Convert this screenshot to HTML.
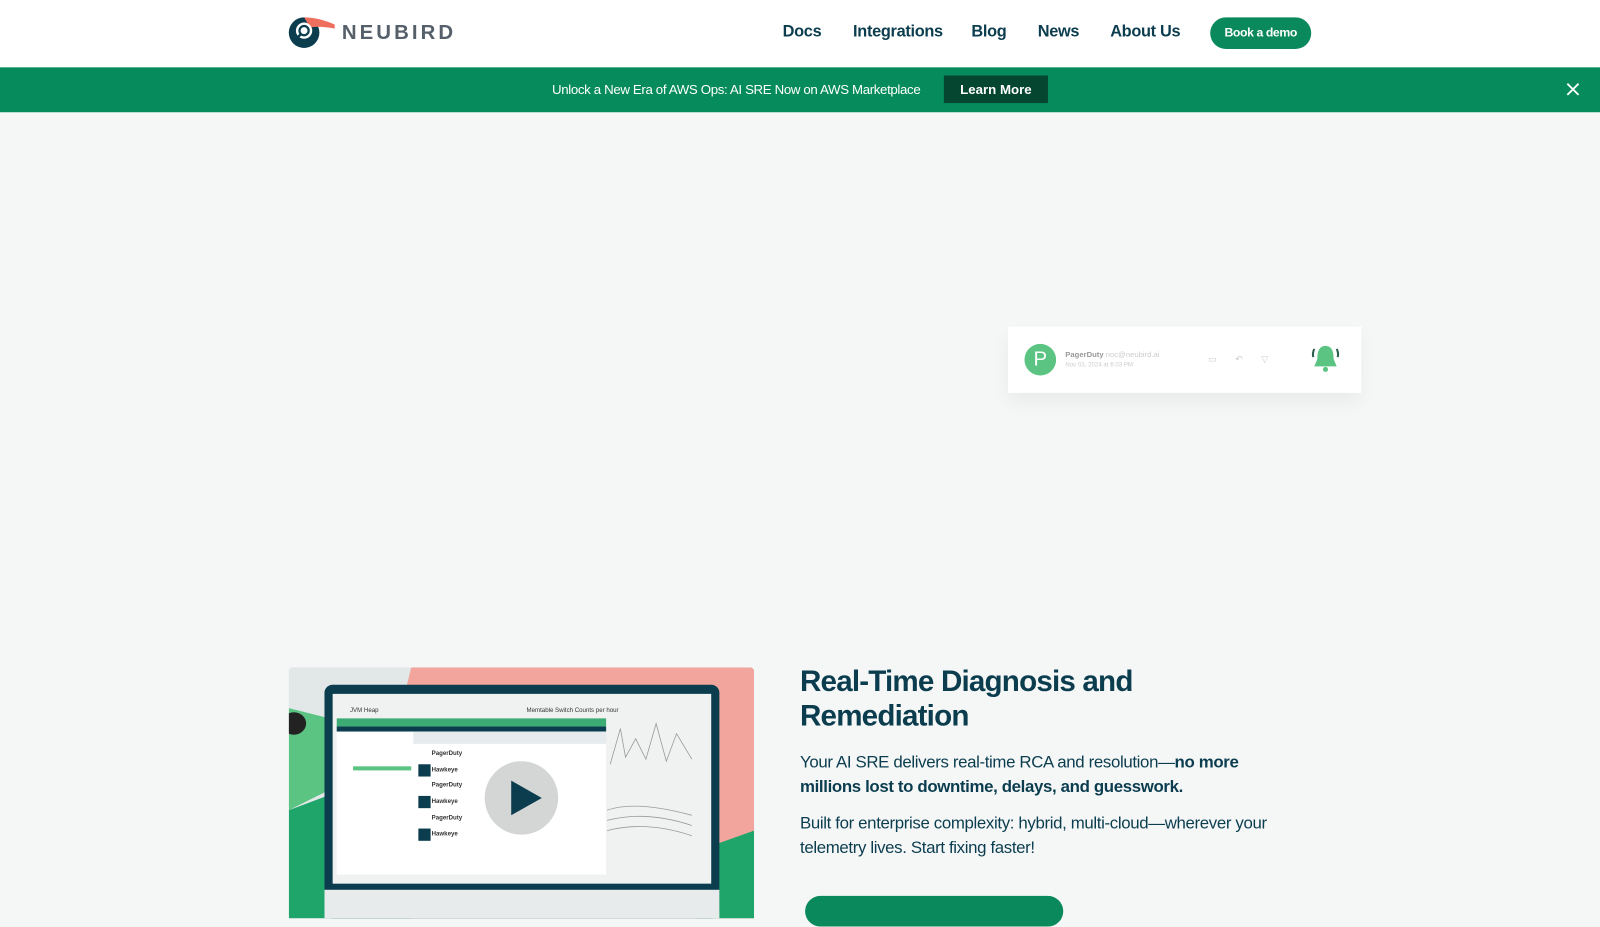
<!DOCTYPE html>
<html><head><meta charset="utf-8"><style>
*{margin:0;padding:0;box-sizing:border-box}
body{width:1600px;height:900px;overflow:hidden;background:#f5f7f7;font-family:"Liberation Sans",Arial,sans-serif;position:relative;color:#0b3d4f}
#w{position:absolute;left:0;top:0;width:1568px;height:882px;transform:scale(1.0204);transform-origin:0 0}
.hdr{position:absolute;left:0;top:0;width:1568px;height:66px;background:#fff}
.nav a{position:absolute;top:23px;font-size:16px;font-weight:bold;color:#0b3d4f;text-decoration:none;letter-spacing:-0.3px}
.btn{position:absolute;left:1186px;top:17px;width:99px;height:31px;border-radius:16px;background:#0a8a5c;color:#fff;font-size:12px;font-weight:bold;text-align:center;line-height:31px;letter-spacing:-0.4px}
.ban{position:absolute;left:0;top:66px;width:1568px;height:44px;background:#058b5c}
.ban .t{position:absolute;left:541px;top:14px;color:#fff;font-size:13px;letter-spacing:-0.35px;white-space:nowrap}
.ban .lm{position:absolute;left:925px;top:8px;width:102px;height:27px;background:#054631;color:#fff;font-weight:bold;font-size:13px;text-align:center;line-height:27px}
.card{position:absolute;left:988px;top:320px;width:346px;height:65px;background:#fff;box-shadow:0 10px 18px rgba(0,0,0,.05)}
h2{position:absolute;left:784px;top:651px;font-size:29px;line-height:34px;font-weight:bold;letter-spacing:-0.8px;color:#0b3d4f}
.p{position:absolute;left:784px;font-size:16.5px;line-height:23.5px;color:#0b3d4f;width:480px;letter-spacing:-0.35px}
</style></head><body><div id="w">
<div class="hdr">
<svg style="position:absolute;left:282px;top:15px" width="50" height="34" viewBox="0 0 50 34">
<circle cx="16" cy="17" r="15" fill="#0b3d4f"/>
<path d="M16 2 Q30 2 46 9 L46 13 Q30 10 22 12 Z" fill="#ef6f5e"/>
<circle cx="16" cy="15" r="8" fill="#fff"/>
<circle cx="16" cy="15" r="4.5" fill="none" stroke="#0b3d4f" stroke-width="2.2"/>
<path d="M13 18 L8 24" stroke="#0b3d4f" stroke-width="2.5"/>
</svg>
<div style="position:absolute;left:335px;top:21px;font-size:20px;font-weight:bold;letter-spacing:3px;color:#56606a">NEUBIRD</div>
<div class="nav"><a style="left:767px">Docs</a><a style="left:836px">Integrations</a><a style="left:952px">Blog</a><a style="left:1017px">News</a><a style="left:1088px">About Us</a></div>
<div class="btn">Book a demo</div>
</div>
<div class="ban"><div class="t">Unlock a New Era of AWS Ops: AI SRE Now on AWS Marketplace</div><div class="lm">Learn More</div>
<svg style="position:absolute;left:1535px;top:15px" width="13" height="13"><path d="M1 1L12 12M12 1L1 12" stroke="#fff" stroke-width="1.8"/></svg></div>
<div class="card">
<div style="position:absolute;left:16px;top:17px;width:31px;height:31px;border-radius:50%;background:#5cc483;color:#fff;font-size:20px;text-align:center;line-height:31px">P</div>
<div style="position:absolute;left:56px;top:23px;font-size:7.5px;font-weight:bold;color:#999">PagerDuty <span style="font-weight:normal;color:#ccc">noc@neubird.ai</span></div>
<div style="position:absolute;left:56px;top:35px;font-size:6px;color:#ccc">Nov 03, 2024 at 6:03 PM</div>
<div style="position:absolute;left:196px;top:27px;font-size:9px;color:#ccc;letter-spacing:18px">▭↶▽</div>
<svg style="position:absolute;left:296px;top:16px" width="30" height="32" viewBox="0 0 30 32"><path d="M15 3 C8 3 7 10 7 16 L4 23 L26 23 L23 16 C23 10 22 3 15 3Z" fill="#5cc483"/><circle cx="15" cy="26" r="2.5" fill="#5cc483"/><path d="M4 6 Q2 10 3 14 M26 6 Q28 10 27 14" stroke="#2b5d4c" stroke-width="2" fill="none"/></svg>
</div>
<div style="position:absolute;left:283px;top:654px;width:456px;height:246px;overflow:hidden;background:#e2e7e7;border-radius:4px 4px 0 0">
<svg width="456" height="246" style="position:absolute;left:0;top:0">
<polygon points="120,0 456,0 456,246 60,246" fill="#f2a59c"/>
<polygon points="0,40 40,50 80,100 0,140" fill="#5cc483"/>
<polygon points="0,140 120,95 120,246 0,246" fill="#1fa56a"/>
<polygon points="400,180 456,160 456,246 400,246" fill="#1fa56a"/>
<ellipse cx="5" cy="55" rx="12" ry="11" fill="#222"/>
<rect x="35" y="17" width="387" height="229" rx="8" fill="#0b3d4f"/>
<rect x="43" y="26" width="371" height="186" fill="#f0f2f2"/>
<rect x="35" y="218" width="387" height="28" fill="#e8ebeb"/>
<rect x="47" y="50" width="264" height="8" fill="#3dac74"/>
<rect x="47" y="58" width="264" height="5" fill="#0b3d4f"/>
<rect x="47" y="63" width="264" height="140" fill="#fff"/>
<rect x="122" y="63" width="189" height="12" fill="#e6ecee"/>
<rect x="63" y="97" width="57" height="4" fill="#5cc483"/>
<rect x="127" y="95" width="12" height="12" fill="#0b3d4f"/>
<rect x="127" y="126" width="12" height="12" fill="#0b3d4f"/>
<rect x="127" y="158" width="12" height="12" fill="#0b3d4f"/>
<text x="60" y="44" font-size="6" fill="#333" font-family="Liberation Sans">JVM Heap</text>
<text x="233" y="44" font-size="6" fill="#333" font-family="Liberation Sans">Memtable Switch Counts per hour</text>
<text x="140" y="86" font-size="6" font-weight="bold" fill="#333" font-family="Liberation Sans">PagerDuty</text>
<text x="140" y="102" font-size="6" font-weight="bold" fill="#333" font-family="Liberation Sans">Hawkeye</text>
<text x="140" y="117" font-size="6" font-weight="bold" fill="#333" font-family="Liberation Sans">PagerDuty</text>
<text x="140" y="133" font-size="6" font-weight="bold" fill="#333" font-family="Liberation Sans">Hawkeye</text>
<text x="140" y="149" font-size="6" font-weight="bold" fill="#333" font-family="Liberation Sans">PagerDuty</text>
<text x="140" y="165" font-size="6" font-weight="bold" fill="#333" font-family="Liberation Sans">Hawkeye</text>
<path d="M315 95 L325 60 L330 88 L340 70 L350 90 L360 55 L370 92 L380 65 L395 90" stroke="#999" fill="none" stroke-width="0.8"/>
<path d="M312 140 Q340 130 395 145 M312 150 Q350 140 395 155 M312 160 Q350 150 395 165" stroke="#999" fill="none" stroke-width="0.8"/>
<circle cx="228" cy="128" r="36" fill="#cfd1d1" opacity="0.9"/>
<polygon points="218,111 218,145 248,128" fill="#0b3d4f"/>
</svg></div>
<h2>Real-Time Diagnosis and<br>Remediation</h2>
<div class="p" style="top:736px">Your AI SRE delivers real-time RCA and resolution—<b>no more millions lost to downtime, delays, and guesswork.</b></div>
<div class="p" style="top:796px">Built for enterprise complexity: hybrid, multi-cloud—wherever your telemetry lives. Start fixing faster!</div>
<div style="position:absolute;left:789px;top:878px;width:253px;height:30px;border-radius:15px;background:#0a8a5c"></div>
</div></body></html>
